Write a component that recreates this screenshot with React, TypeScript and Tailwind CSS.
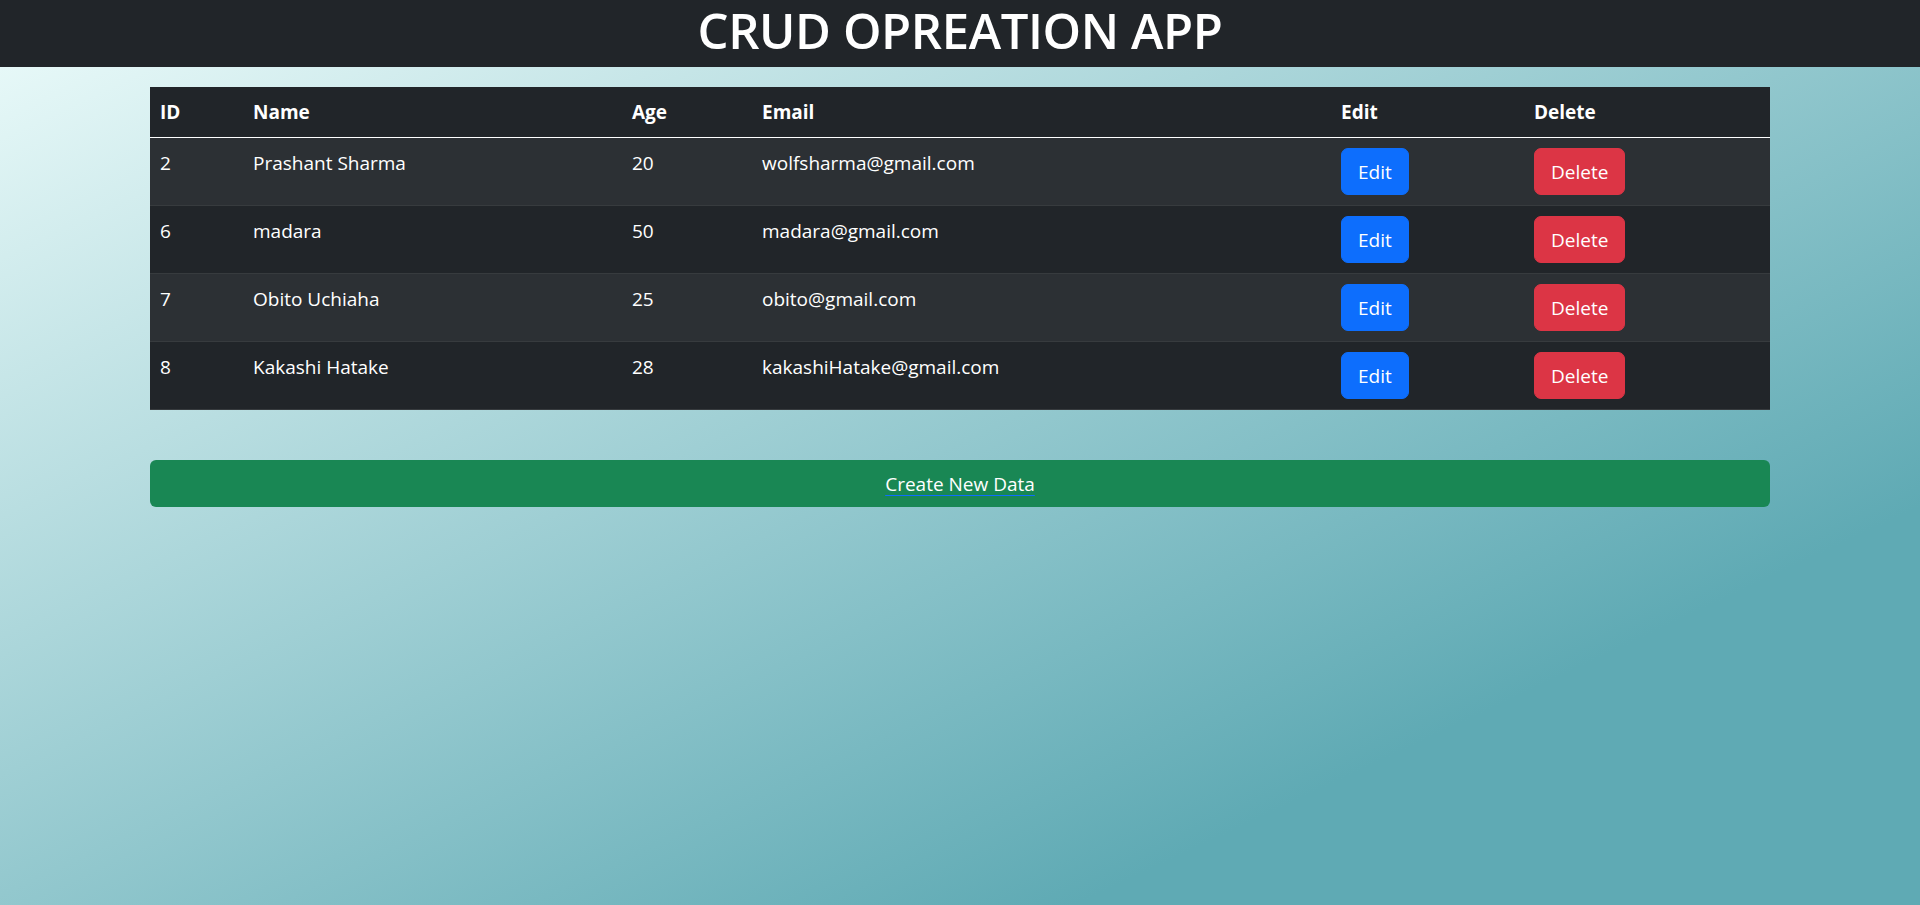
import React from "react";

type Person = { id: number; name: string; age: number; email: string };

const people: Person[] = [
  { id: 2, name: "Prashant Sharma", age: 20, email: "wolfsharma@gmail.com" },
  { id: 6, name: "madara", age: 50, email: "madara@gmail.com" },
  { id: 7, name: "Obito Uchiaha", age: 25, email: "obito@gmail.com" },
  { id: 8, name: "Kakashi Hatake", age: 28, email: "kakashiHatake@gmail.com" },
];

const App = () => {
  return (
    <div className="min-h-screen bg-[linear-gradient(to_bottom_right,#edfcfb_0%,#5faab4_78%)] font-['Open_Sans',sans-serif] text-white">
      <header className="h-[67px] bg-[#212529] flex justify-center">
        <h1 className="text-[49px] leading-[60px] font-semibold tracking-[-0.4px]">CRUD OPREATION APP</h1>
      </header>

      <main className="w-[1620px] mx-auto pt-[20px]">
        <table className="w-full table-fixed border-collapse text-[19px] leading-[30px]">
          <colgroup>
            <col className="w-[93px]" />
            <col className="w-[379px]" />
            <col className="w-[130px]" />
            <col className="w-[579px]" />
            <col className="w-[193px]" />
            <col />
          </colgroup>
          <thead>
            <tr className="bg-[#212529] border-b border-white">
              <th className="text-left align-top font-bold px-[10px] py-[10px]">ID</th>
              <th className="text-left align-top font-bold px-[10px] py-[10px]">Name</th>
              <th className="text-left align-top font-bold px-[10px] py-[10px]">Age</th>
              <th className="text-left align-top font-bold px-[10px] py-[10px]">Email</th>
              <th className="text-left align-top font-bold px-[10px] py-[10px]">Edit</th>
              <th className="text-left align-top font-bold px-[10px] py-[10px]">Delete</th>
            </tr>
          </thead>
          <tbody>
            {people.map((p, i) => (
              <tr key={p.id} className={(i % 2 === 0 ? "bg-[#2c3034]" : "bg-[#212529]") + " border-b border-[#373b3e]"}>
                <td className="align-top px-[10px] py-[10px]">{p.id}</td>
                <td className="align-top px-[10px] py-[10px]">{p.name}</td>
                <td className="align-top px-[10px] py-[10px]">{p.age}</td>
                <td className="align-top px-[10px] py-[10px]">{p.email}</td>
                <td className="align-top px-[10px] py-[10px]">
                  <button className="block bg-[#0d6efd] border border-[#0d6efd] rounded-[7px] px-[16px] py-[7.5px] leading-[30px] text-[19px]">Edit</button>
                </td>
                <td className="align-top px-[10px] py-[10px]">
                  <button className="block bg-[#dc3545] border border-[#dc3545] rounded-[7px] px-[16px] py-[7.5px] leading-[30px] text-[19px]">Delete</button>
                </td>
              </tr>
            ))}
          </tbody>
        </table>

        <button className="mt-[50px] w-full h-[47px] bg-[#198754] rounded-[6px] text-[19px] leading-[30px] flex items-center justify-center">
          <span className="underline decoration-[#0d6efd] underline-offset-[4px]">Create New Data</span>
        </button>
      </main>
    </div>
  );
};

export default App;
